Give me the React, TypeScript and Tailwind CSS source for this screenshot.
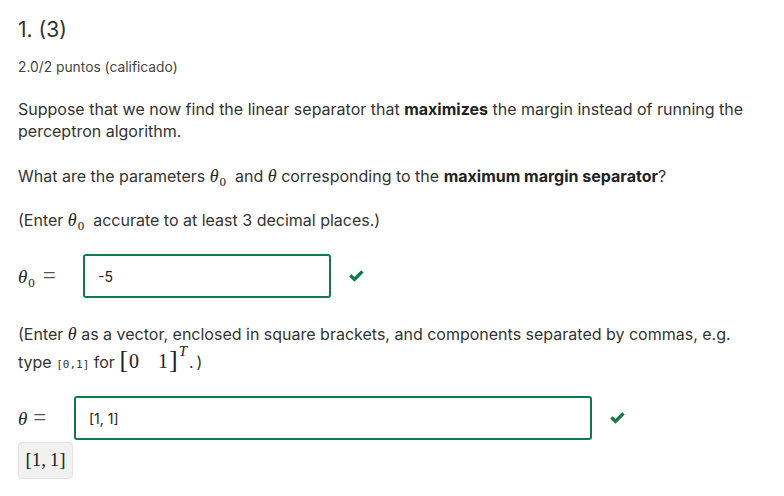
import React from "react";

const serif = { fontFamily: '"Liberation Serif", "DejaVu Serif", serif' } as const;

function Theta({ sub, size = 18 }: { sub?: boolean; size?: number }) {
  return (
    <span className="inline-block text-[#222]" style={{ ...serif, fontSize: size, lineHeight: 1 }}>
      <i>θ</i>
      {sub && <span className="relative top-[4px] text-[13px] ml-[1px]">0</span>}
    </span>
  );
}

function Check() {
  return (
    <svg width="17" height="13" viewBox="0 0 17 13" className="shrink-0">
      <path d="M1.2 6.6 L3.6 4.3 L6.4 7.1 L13.3 0.3 L15.7 2.6 L6.4 11.8 Z" fill="#117a4b" />
    </svg>
  );
}

export default function App() {
  return (
    <div
      className="w-[784px] h-[496px] bg-white text-[#333] overflow-hidden pl-[18px] pt-[17px]"
      style={{ fontFamily: 'Inter, "Noto Sans", sans-serif' }}
    >
      <h3 className="text-[21px] leading-[26px] text-[#313131] font-normal">1. (3)</h3>
      <div className="mt-[16px] text-[13.8px] leading-[16px] text-[#454545]">2.0/2 puntos (calificado)</div>

      <div className="mt-[23px] text-[16px] leading-[22px] w-[750px]">
        Suppose that we now find the linear separator that <b className="font-bold text-[#222]">maximizes</b> the
        margin instead of running the perceptron algorithm.
      </div>

      <div className="mt-[23px] text-[16px] leading-[22px] flex items-baseline">
        <span>What are the parameters&nbsp;</span>
        <Theta sub />
        <span>&nbsp;&nbsp;and&nbsp;</span>
        <Theta />
        <span>
          &nbsp;corresponding to the <b className="font-bold text-[#222]">maximum margin separator</b>?
        </span>
      </div>

      <div className="mt-[22px] text-[16px] leading-[22px] flex items-baseline">
        <span>(Enter&nbsp;</span>
        <Theta sub />
        <span>&nbsp;&nbsp;accurate to at least 3 decimal places.)</span>
      </div>

      <div className="mt-[23px] flex items-center h-[44px]">
        <div className="w-[65px] flex items-baseline">
          <Theta sub size={19} />
          <span className="ml-[8px] text-[#555]" style={{ ...serif, fontSize: 23 }}>=</span>
        </div>
        <div className="w-[248px] h-[44px] border-2 border-[#117a4b] rounded-[3px] flex items-center pl-[13px] text-[14px] text-[#222]">
          -5
        </div>
        <div className="ml-[17px] mt-[1px]">
          <Check />
        </div>
      </div>

      <div className="mt-[24px] text-[16px] leading-[25px] w-[750px]">
        <div className="flex items-baseline">
          <span>(Enter&nbsp;</span>
          <Theta />
          <span>&nbsp;as a vector, enclosed in square brackets, and components separated by commas, e.g.</span>
        </div>
        <div className="flex items-baseline">
          <span>type&nbsp;</span>
          <span className="text-[11px]" style={{ fontFamily: '"DejaVu Sans Mono", "Liberation Mono", monospace' }}>
            [0,1]
          </span>
          <span>&nbsp;for&nbsp;</span>
          <span className="text-[#222] inline-flex items-baseline" style={{ ...serif, fontSize: 20 }}>
            <span className="text-[26px] font-light leading-none">[</span>
            <span className="ml-[1px]">0</span>
            <span className="ml-[19px]">1</span>
            <span className="text-[26px] font-light leading-none ml-[1px]">]</span>
            <i className="relative -top-[12px] text-[15px] ml-[1px]">T</i>
          </span>
          <span className="ml-[2px]">.&thinsp;)</span>
        </div>
      </div>

      <div className="mt-[19px] flex items-center h-[44px]">
        <div className="w-[56px] flex items-baseline">
          <Theta size={19} />
          <span className="ml-[6px] text-[#555]" style={{ ...serif, fontSize: 23 }}>=</span>
        </div>
        <div className="w-[518px] h-[44px] border-2 border-[#117a4b] rounded-[3px] flex items-center pl-[13px] text-[14px] text-[#222]">
          [1, 1]
        </div>
        <div className="ml-[17px] mt-[1px]">
          <Check />
        </div>
      </div>

      <div className="mt-[2px] w-[55px] h-[37px] bg-[#f1f1f1] border border-[#e4e4e4] rounded-[4px] flex items-center justify-center text-[#222]" style={{ ...serif, fontSize: 19 }}>
        [1,&thinsp;1]
      </div>
    </div>
  );
}
